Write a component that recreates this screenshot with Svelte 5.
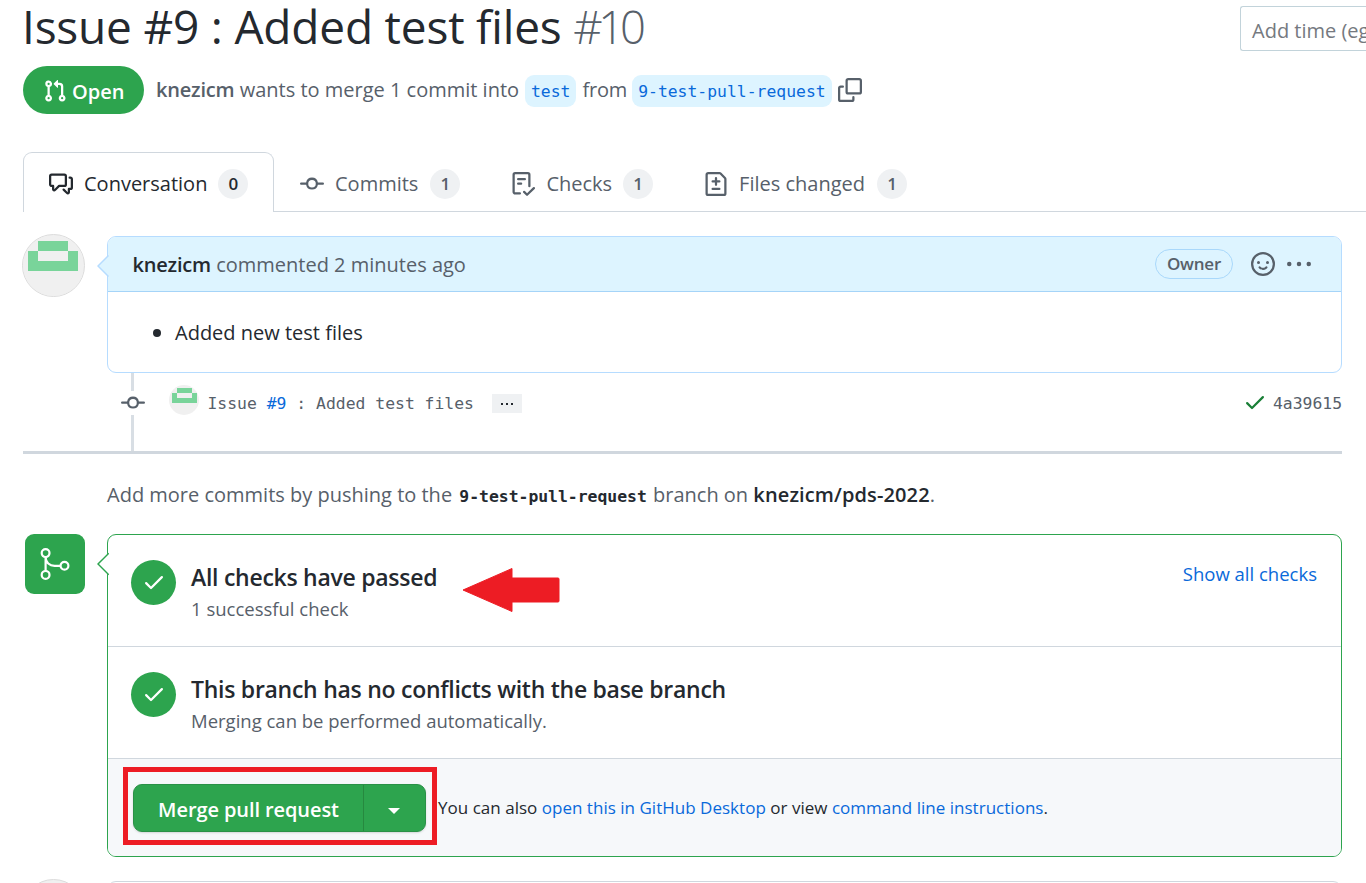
<script>
  const tabs = [
    { label: 'Conversation', count: 0, icon: 'discussion', active: true },
    { label: 'Commits', count: 1, icon: 'commit' },
    { label: 'Checks', count: 1, icon: 'checklist' },
    { label: 'Files changed', count: 1, icon: 'diff' }
  ];

  const checks = [
    { title: 'All checks have passed', note: '1 successful check', link: 'Show all checks' },
    { title: 'This branch has no conflicts with the base branch', note: 'Merging can be performed automatically.' }
  ];

  const icons = {
    pull: 'M7.177 3.073L9.573.677A.25.25 0 0110 .854v4.792a.25.25 0 01-.427.177L7.177 3.427a.25.25 0 010-.354zM3.75 2.5a.75.75 0 100 1.5.75.75 0 000-1.5zm-2.25.75a2.25 2.25 0 113 2.122v5.256a2.251 2.251 0 11-1.5 0V5.372A2.25 2.25 0 011.5 3.25zM11 2.5h-1V4h1a1 1 0 011 1v5.628a2.251 2.251 0 101.5 0V5A2.5 2.5 0 0011 2.5zm1 10.25a.75.75 0 111.5 0 .75.75 0 01-1.5 0zM3.75 12a.75.75 0 100 1.5.75.75 0 000-1.5z',
    copy: 'M0 6.75C0 5.784.784 5 1.75 5h1.5a.75.75 0 010 1.5h-1.5a.25.25 0 00-.25.25v7.5c0 .138.112.25.25.25h7.5a.25.25 0 00.25-.25v-1.5a.75.75 0 011.5 0v1.5A1.75 1.75 0 019.25 16h-7.5A1.75 1.75 0 010 14.25v-7.5zM5 1.75C5 .784 5.784 0 6.75 0h7.5C15.216 0 16 .784 16 1.75v7.5A1.75 1.75 0 0114.25 11h-7.5A1.75 1.75 0 015 9.25v-7.5zm1.75-.25a.25.25 0 00-.25.25v7.5c0 .138.112.25.25.25h7.5a.25.25 0 00.25-.25v-7.5a.25.25 0 00-.25-.25h-7.5z',
    discussion: 'M1.5 2.75a.25.25 0 01.25-.25h8.5a.25.25 0 01.25.25v5.5a.25.25 0 01-.25.25h-3.5a.75.75 0 00-.53.22L3.5 11.44V9.25a.75.75 0 00-.75-.75h-1a.25.25 0 01-.25-.25v-5.5zM1.75 1A1.75 1.75 0 000 2.75v5.5C0 9.216.784 10 1.75 10H2v1.543a1.457 1.457 0 002.487 1.03L7.061 10h3.189A1.75 1.75 0 0012 8.25v-5.5A1.75 1.75 0 0010.25 1h-8.5zM14.5 4.75a.25.25 0 00-.25-.25h-.5a.75.75 0 110-1.5h.5c.966 0 1.75.784 1.75 1.75v5.5A1.75 1.75 0 0114.25 12H14v1.543a1.457 1.457 0 01-2.487 1.03L9.22 12.28a.75.75 0 111.06-1.06l2.22 2.22v-2.19a.75.75 0 01.75-.75h1a.25.25 0 00.25-.25v-5.5z',
    commit: 'M10.5 7.75a2.5 2.5 0 11-5 0 2.5 2.5 0 015 0zm1.43.75a4.002 4.002 0 01-7.86 0H.75a.75.75 0 110-1.5h3.32a4.001 4.001 0 017.86 0h3.32a.75.75 0 110 1.5h-3.32z',
    checklist: 'M2.5 1.75a.25.25 0 01.25-.25h8.5a.25.25 0 01.25.25v7.736a.75.75 0 101.5 0V1.75A1.75 1.75 0 0011.25 0h-8.5A1.75 1.75 0 001 1.75v11.5c0 .966.784 1.75 1.75 1.75h3.17a.75.75 0 000-1.5H2.75a.25.25 0 01-.25-.25V1.75zM4.75 4a.75.75 0 000 1.5h4.5a.75.75 0 000-1.5h-4.5zM4 7.75A.75.75 0 014.75 7h2a.75.75 0 010 1.5h-2A.75.75 0 014 7.75zm11.774 3.537a.75.75 0 00-1.048-1.074L10.7 14.145 9.281 12.72a.75.75 0 00-1.062 1.058l1.943 1.95a.75.75 0 001.055.008l4.557-4.45z',
    diff: 'M2.75 1.5a.25.25 0 00-.25.25v12.5c0 .138.112.25.25.25h10.5a.25.25 0 00.25-.25V4.664a.25.25 0 00-.073-.177l-2.914-2.914a.25.25 0 00-.177-.073H2.75zM1 1.75C1 .784 1.784 0 2.75 0h7.586c.464 0 .909.184 1.237.513l2.914 2.914c.329.328.513.773.513 1.237v9.586A1.75 1.75 0 0113.25 16H2.75A1.75 1.75 0 011 14.25V1.75zm7 1.5a.75.75 0 01.75.75v1.5h1.5a.75.75 0 010 1.5h-1.5v1.5a.75.75 0 01-1.5 0V7h-1.5a.75.75 0 010-1.5h1.5V4A.75.75 0 018 3.25zm-3 8a.75.75 0 01.75-.75h4.5a.75.75 0 010 1.5h-4.5a.75.75 0 01-.75-.75z',
    smiley: 'M1.5 8a6.5 6.5 0 1113 0 6.5 6.5 0 01-13 0zM8 0a8 8 0 100 16A8 8 0 008 0zM5 8a1 1 0 100-2 1 1 0 000 2zm7-1a1 1 0 11-2 0 1 1 0 012 0zM5.32 9.636a.75.75 0 011.038.175l.007.009c.103.118.22.222.35.31.264.178.683.37 1.285.37.602 0 1.02-.192 1.285-.371.13-.088.247-.192.35-.31l.007-.008a.75.75 0 111.222.87c-.2.27-.45.5-.728.678-.63.418-1.37.638-2.127.629-.946 0-1.652-.308-2.126-.63a3.32 3.32 0 01-.738-.68.75.75 0 01.175-1.042z',
    kebab: 'M1.5 9.5a1.5 1.5 0 100-3 1.5 1.5 0 000 3zM8 9.5a1.5 1.5 0 100-3 1.5 1.5 0 000 3zM14.5 9.5a1.5 1.5 0 100-3 1.5 1.5 0 000 3z',
    check: 'M13.78 4.22a.75.75 0 010 1.06l-7.25 7.25a.75.75 0 01-1.06 0L2.22 9.28a.75.75 0 011.06-1.06L6 10.94l6.72-6.72a.75.75 0 011.06 0z'
  };
</script>

{#snippet icon(name)}
  <svg class="icon" viewBox="0 0 16 16" width="24" height="24" fill="currentColor" fill-rule="evenodd"><path d={icons[name]} /></svg>
{/snippet}

{#snippet identicon()}
  <svg viewBox="0 0 60 60" shape-rendering="crispEdges">
    <rect width="60" height="60" fill="#f0f0f0" />
    <path d="M15 5h30v10h10v20H5V15h10zM15 15v10h30V15z" fill="#79d49a" fill-rule="evenodd" />
  </svg>
{/snippet}

<main>
  <header>
    <h1>Issue #9 : Added test files <span class="number">#10</span></h1>
    <div class="time">Add time (eg</div>
  </header>

  <div class="meta">
    <span class="state">{@render icon('pull')}<span>Open</span></span>
    <p><b>knezicm</b> wants to merge 1 commit into</p>
    <a class="branch">test</a>
    <span class="from">from</span>
    <a class="branch">9-test-pull-request</a>
    <span class="copy">{@render icon('copy')}</span>
  </div>

  <nav>
    {#each tabs as tab}
      <a class="tab" class:active={tab.active}>
        {@render icon(tab.icon)}
        <span class="label">{tab.label}</span>
        <span class="count">{tab.count}</span>
      </a>
    {/each}
  </nav>

  <section class="row">
    <div class="avatar">{@render identicon()}</div>
    <article class="comment">
      <svg class="caret" width="12" height="24" viewBox="0 0 12 24"><path d="M11.5 1.5L1 12l10.500 10.500H12V1.500z" fill="#ddf4ff" /><path d="M11.500 1.500L1 12l10.500 10.500" fill="none" stroke="#b6dcff" stroke-width="1.500" /></svg>
      <div class="comment-head">
        <p><b>knezicm</b> commented 2 minutes ago</p>
        <span class="owner">Owner</span>
        {@render icon('smiley')}
        {@render icon('kebab')}
      </div>
      <div class="comment-body"><i class="bullet"></i>Added new test files</div>
    </article>
  </section>

  <section class="commit">
    <div class="rail">
      <span class="line top"></span>
      {@render icon('commit')}
      <span class="line bottom"></span>
    </div>
    <div class="commit-line">
      <span class="mini">{@render identicon()}</span>
      <code>Issue <a>#9</a> : Added test files</code>
      <span class="more"><i></i><i></i><i></i></span>
      <span class="passed">{@render icon('check')}</span>
      <code class="sha">4a39615</code>
    </div>
  </section>

  <p class="hint">Add more commits by pushing to the <code>9-test-pull-request</code> branch on <b>knezicm/pds-2022</b>.</p>

  <section class="row merge-row">
    <div class="merge-icon">
      <svg width="36" height="36" viewBox="0 0 36 36" fill="none" stroke="#fff" stroke-width="2.2">
        <circle cx="8.600" cy="7.100" r="3.900" /><circle cx="8.600" cy="28.900" r="3.900" /><circle cx="27.500" cy="19.800" r="3.900" />
        <path d="M8.600 11v14M8.600 11c0 5.500 4 8.800 9 8.800h6" />
      </svg>
    </div>
    <article class="merge">
      <svg class="caret" width="12" height="24" viewBox="0 0 12 24"><path d="M11 1.500L.9 12 11 22.500h1v-21z" fill="#fff" /><path d="M11.800 1.200L1 12l10.800 10.800" fill="none" stroke="#2da44e" stroke-width="1.500" /></svg>
      {#each checks as item}
        <div class="check">
          <span class="disc">{@render icon('check')}</span>
          <div class="check-text">
            <h2>{item.title}</h2>
            <p>{item.note}</p>
          </div>
          {#if item.link}<a>{item.link}</a>{/if}
        </div>
      {/each}
      <footer>
        <div class="button"><span>Merge pull request</span><i></i></div>
        <p>You can also <a>open this in GitHub Desktop</a> or view <a>command line instructions</a>.</p>
        <div class="frame"></div>
      </footer>
      <svg class="arrow" width="100" height="46" viewBox="0 0 100 46"><path d="M2 23L51 1.500v9.500h46q1 0 1 1v22q0 1-1 1H51v9.500z" fill="#ed1c24" stroke="#ed1c24" stroke-linejoin="round" /></svg>
    </article>
  </section>

  <section class="row next">
    <div class="avatar"></div>
    <div class="write"></div>
  </section>
</main>

<style>
  :global(body) { background: #fff; overflow: hidden; }
  main { width: 1366px; height: 883px; overflow: hidden; font: 20px/30px 'Open Sans', 'Noto Sans', sans-serif; color: #57606a; white-space: nowrap; }
  main * { box-sizing: border-box; }
  h1, h2, p { margin: 0; font-weight: 400; }
  b { font-weight: 600; color: #24292f; }
  a { color: #0969da; }
  svg { display: block; flex: none; }
  code { font-family: 'DejaVu Sans Mono', monospace; font-size: 16.400px; }

  header { display: flex; justify-content: space-between; height: 66px; padding-left: 22px; }
  h1 { font-size: 46px; line-height: 52px; color: #24292f; letter-spacing: -0.200px; }
  .number { font-weight: 300; color: #57606a; font-size: 45.500px; letter-spacing: -4.300px; }
  .time { width: 126px; height: 45px; margin-top: 6px; padding: 9px 0 0 11px; border: 1px solid #c2d3da; border-right: 0; border-radius: 3px 0 0 3px; color: #757980; overflow: hidden; }

  .meta { display: flex; height: 86px; padding-left: 23px; }
  .meta b { color: inherit; letter-spacing: -0.200px; }
  .meta p { width: 364px; margin: 9px 5px 0 12px; }
  .state { display: flex; width: 121px; height: 48px; padding: 13px 0 0 20px; border-radius: 24px; background: #2da44e; color: #fff; font-weight: 600; }
  .state span { margin: -2px 0 0 5px; }
  .branch { height: 32px; margin-top: 9px; padding: 0 6px; border-radius: 9px; background: #ddf4ff; font: 16.400px/33px 'DejaVu Sans Mono', monospace; }
  .from { margin: 9px 5px 0 6px; letter-spacing: -0.200px; }
  .copy { margin: 12px 0 0 6px; }

  nav { display: flex; height: 60px; margin-left: 23px; box-shadow: inset 0 -1px #d0d7de; }
  .tab { display: flex; align-items: center; height: 60px; padding: 3px 25px 0 26px; color: #57606a; }
  .tab .label { margin: 0 11px; }
  .tab:last-child .label { margin-right: 12px; }
  .tab:nth-child(2) .label { margin-right: 12px; }
  .active { width: 251px; padding: 2px 24px 0 25px; border: 1px solid #d0d7de; border-bottom: 0; border-radius: 9px 9px 0 0; background: #fff; color: #24292f; }
  .count { min-width: 30px; height: 30px; border-radius: 15px; background: #eff1f3; text-align: center; font-size: 17px; line-height: 30px; font-weight: 600; margin-top: 1px; }

  .row { display: flex; padding: 0 24px 0 22px; }
  .avatar { flex: none; width: 63px; height: 63px; margin: -2px 22px 0 0; border: 1px solid #dcdcdc; border-radius: 50%; background: #f0f0f0; overflow: hidden; }
  .avatar svg { width: 60px; height: 60px; margin-top: 1px; }
  section.row:not(.next) { margin-top: 24px; }
  article { position: relative; flex: 1; border-radius: 9px; }
  .caret { position: absolute; left: -11px; top: 17px; }
  .comment { height: 137px; border: 1px solid #b6dcff; }
  .comment-head { display: flex; align-items: center; height: 55px; padding: 0 30px 0 24.500px; border-bottom: 1px solid #a5d4f8; border-radius: 8px 8px 0 0; background: #ddf4ff; }
  .comment-head p { flex: 1; padding-top: 1px; }
  .comment-head b { letter-spacing: -0.200px; }
  .owner { width: 78px; height: 30px; margin-right: 18px; border: 1px solid #a9d8fb; border-radius: 15px; text-align: center; font-size: 17px; line-height: 28px; font-weight: 600; letter-spacing: -0.200px; }
  .comment-head .icon + .icon { margin-left: 12px; }
  .comment-body { display: flex; align-items: center; height: 81px; padding-left: 45px; color: #24292f; }
  .bullet { width: 8px; height: 8px; margin-right: 14px; border-radius: 50%; background: #24292f; }

  .commit { display: flex; height: 81px; margin: 0 24px 0 23px; padding-left: 98px; border-bottom: 3px solid #d0d7de; }
  .rail { display: flex; flex-direction: column; align-items: center; width: 24px; }
  .line { width: 3px; margin-right: 1px; background: #d8dee4; }
  .top { height: 18px; }
  .bottom { height: 36px; }
  .commit-line { display: flex; align-items: center; flex: 1; height: 61px; padding-left: 24px; }
  .mini { width: 30px; height: 30px; margin: -7px 8.500px 0 0; border-radius: 50%; overflow: hidden; }
  .more { display: flex; justify-content: center; align-items: center; gap: 3px; width: 30px; height: 19px; margin-left: 18px; background: #eff1f3; }
  .more i { width: 2px; height: 2px; background: #24292f; }
  .passed { margin: -3px 6px 0 auto; color: #1a7f37; }

  .hint { height: 56px; padding: 26px 0 0 107px; }
  .hint code { margin: 0 1px 0 2px; color: #24292f; font-weight: 700; }
  .hint b { letter-spacing: 0.120px; }

  .merge-icon { flex: none; width: 60px; height: 60px; margin: 0 22px 0 3px; padding: 12px; border-radius: 9px; background: #2da44e; }
  .merge { height: 323px; border: 1px solid #2da44e; }
  .check { display: flex; height: 112px; padding: 25px 24px 0 23px; border-bottom: 1px solid #d0d7de; }
  .disc { flex: none; width: 45px; height: 45px; padding: 10px 10.500px; border-radius: 50%; background: #2da44e; color: #fff; }
  .check-text { flex: 1; margin: -1px 0 0 15px; }
  h2 { font-size: 23px; line-height: 36px; font-weight: 600; color: #24292f; letter-spacing: -0.270px; }
  .check-text p { font-size: 18.500px; line-height: 27px; }
  .check a { font-size: 18.500px; line-height: 27px; }
  footer { position: relative; display: flex; height: 97px; padding: 25px 0 0 25px; border-radius: 0 0 8px 8px; background: #f6f8fa; }
  .button { display: flex; width: 293px; height: 48px; border: 1px solid #2a9147; border-radius: 9px; background: #2da44e; color: #fff; font-weight: 600; box-shadow: 0 1px 2px #1b1f2426; }
  .button span { width: 230px; padding-top: 10px; border-right: 1px solid #26893f; text-align: center; letter-spacing: -0.090px; }
  .button i { width: 0; height: 0; margin: 23px 0 0 24px; border: 6px solid transparent; border-top-color: #fff; border-bottom: 0; }
  footer p { margin: 9px 0 0 12px; font-size: 17px; color: #24292f; letter-spacing: 0.020px; }
  .frame { position: absolute; left: 15px; top: 8px; width: 314px; height: 78px; border: 5px solid #ed1c24; }
  .arrow { position: absolute; left: 353px; top: 32px; }

  .next { padding-top: 24px; }
  .write { flex: 1; height: 60px; border: 1px solid #d0d7de; border-radius: 9px; }
</style>
